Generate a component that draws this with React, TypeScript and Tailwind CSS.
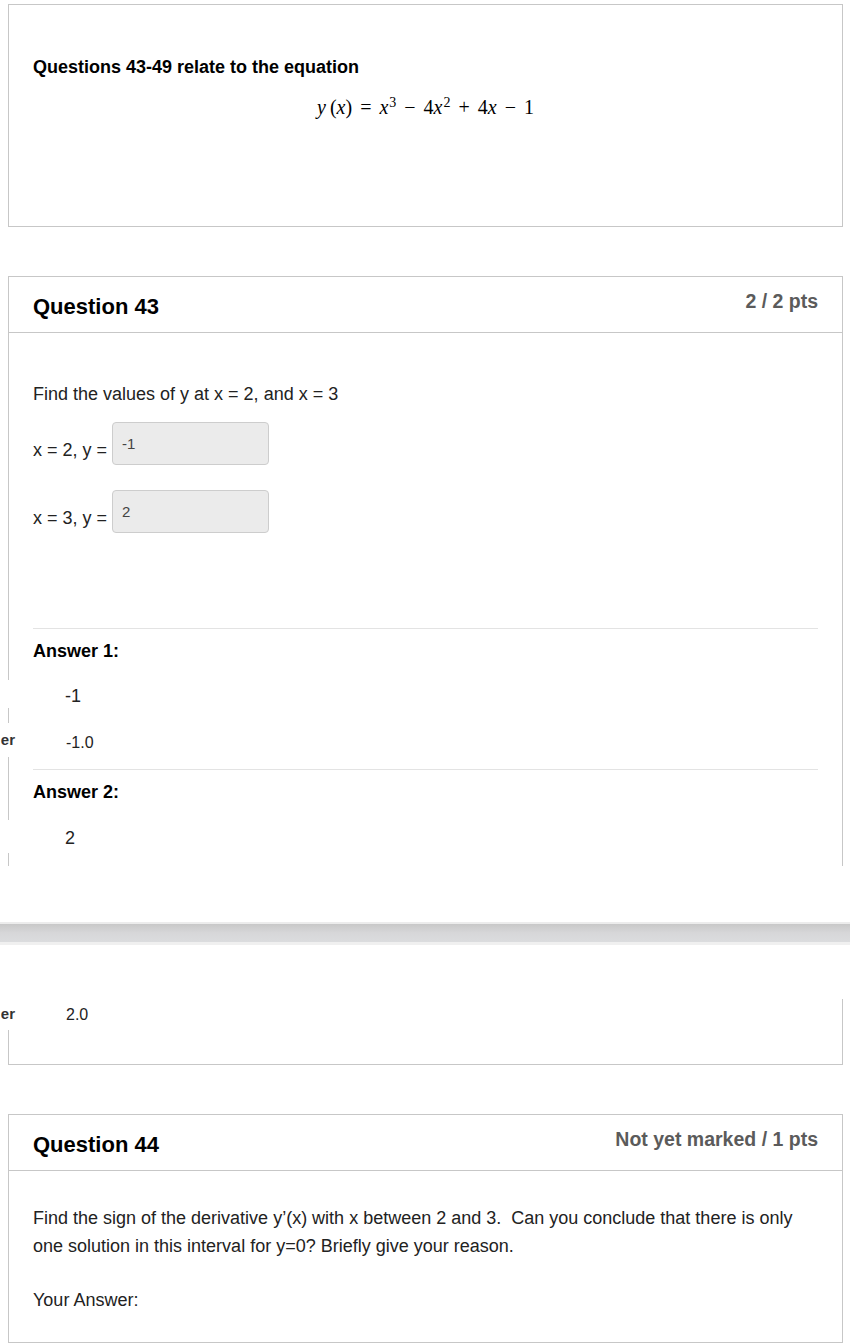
const sans = { fontFamily: '"Liberation Sans", Arial, sans-serif' };

function QuestionHeader({ title, pts }: { title: string; pts: string }) {
  return (
    <div className="flex h-[56px] justify-between border-b border-[#c7c7c7] px-6">
      <span className="pt-[18px] text-[22px] font-bold leading-[24px] text-black">{title}</span>
      <span className="pt-[14px] text-[19.5px] font-bold leading-[20px] text-[#5b5b5b]">{pts}</span>
    </div>
  );
}

function AnswerInput({ label, value }: { label: string; value: string }) {
  return (
    <div className="flex items-start">
      <span className="mt-[18px] text-[18px] leading-[20px] text-[#222]">{label}&nbsp;</span>
      <div className="flex h-[43px] w-[157px] items-start rounded-[4px] border border-[#cdcdcd] bg-[#ebebeb] px-[9px] pt-[11px] text-[15px] leading-[20px] text-[#444]">
        {value}
      </div>
    </div>
  );
}

function LabelMask({ className }: { className: string }) {
  // tail of an answer label overlapping the left border
  return (
    <div className={`absolute left-[-9px] flex w-[15px] items-center justify-end bg-white ${className}`}>
      <span className="whitespace-nowrap text-[15px] font-bold text-[#333]">er</span>
    </div>
  );
}

function Op({ children }: { children: string }) {
  return <span className="mx-[8px]">{children}</span>;
}

export default function App() {
  return (
    <div className="min-h-[1344px] bg-white pl-[8px] pr-[7px] pt-[4px]" style={sans}>
      {/* intro box */}
      <div className="h-[223px] border border-[#c7c7c7] px-6 pt-[52px]">
        <div className="text-[18px] font-bold leading-[20px] text-black">
          Questions 43-49 relate to the equation
        </div>
        <div
          className="mt-[18px] flex items-baseline justify-center text-[20px] leading-[24px] text-black"
          style={{ fontFamily: '"Liberation Serif", "Times New Roman", serif' }}
        >
          <span>
            <i>y</i>&thinsp;(<i>x</i>)
          </span>
          <Op>=</Op>
          <span>
            <i>x</i>
            <sup className="ml-[1px] text-[14px]">3</sup>
          </span>
          <Op>−</Op>
          <span>
            4<i>x</i>
            <sup className="ml-[1px] text-[14px]">2</sup>
          </span>
          <Op>+</Op>
          <span>
            4<i>x</i>
          </span>
          <Op>−</Op>
          <span>1</span>
        </div>
      </div>

      {/* question 43 */}
      <div className="relative mt-[49px] border-x border-t border-[#c7c7c7]">
        <QuestionHeader title="Question 43" pts="2 / 2 pts" />
        <div className="px-6 pb-[18px] pt-[51px]">
          <p className="text-[18px] leading-[20px] text-[#222]">Find the values of y at x = 2, and x = 3</p>
          <div className="mt-[18px]">
            <AnswerInput label="x = 2, y =" value="-1" />
          </div>
          <div className="mt-[25px]">
            <AnswerInput label="x = 3, y =" value="2" />
          </div>
          <div className="mt-[95px] h-px bg-[#e3e3e3]" />
          <div className="mt-[12px] text-[18px] font-bold leading-[20px] text-black">Answer 1:</div>
          <div className="ml-[32px] mt-[25px] text-[18px] leading-[20px] text-[#222]">-1</div>
          <div className="ml-[33px] mt-[27px] text-[16px] leading-[20px] text-[#222]">-1.0</div>
          <div className="mt-[16px] h-px bg-[#e3e3e3]" />
          <div className="mt-[12px] text-[18px] font-bold leading-[20px] text-black">Answer 2:</div>
          <div className="ml-[32px] mt-[26px] text-[18px] leading-[20px] text-[#222]">2</div>
        </div>

        <div className="absolute left-[-9px] top-[403px] h-[28px] w-[14px] bg-white" />
        <LabelMask className="top-[446px] h-[34px]" />
        <div className="absolute left-[-9px] top-[543px] h-[33px] w-[14px] bg-white" />
      </div>

      {/* page break band */}
      <div className="-ml-[8px] -mr-[7px] mt-[56px]">
        <div className="h-[2px] bg-[#ececec]" />
        <div className="h-[18px] bg-gradient-to-b from-[#c8c8c8] via-[#d7d7d9] to-[#dbdcde]" />
        <div className="h-[3px] bg-[#f0f0f0]" />
      </div>

      {/* continued answer */}
      <div className="relative mt-[54px] h-[66px] border-x border-b border-[#c7c7c7] px-6 pt-[6px]">
        <div className="ml-[33px] text-[16px] leading-[20px] text-[#222]">2.0</div>
        <LabelMask className="top-0 h-[31px]" />
      </div>

      {/* question 44 */}
      <div className="mt-[49px] border border-[#c7c7c7]">
        <QuestionHeader title="Question 44" pts="Not yet marked / 1 pts" />
        <div className="px-6 pb-[28px] pt-[33px] text-[18px] leading-[28px] text-[#222]">
          <p>
            Find the sign of the derivative y’(x) with x between 2 and 3.&nbsp; Can you conclude that there is only
            one solution in this interval for y=0? Briefly give your reason.
          </p>
          <p className="mt-[26px]">Your Answer:</p>
        </div>
      </div>
    </div>
  );
}
